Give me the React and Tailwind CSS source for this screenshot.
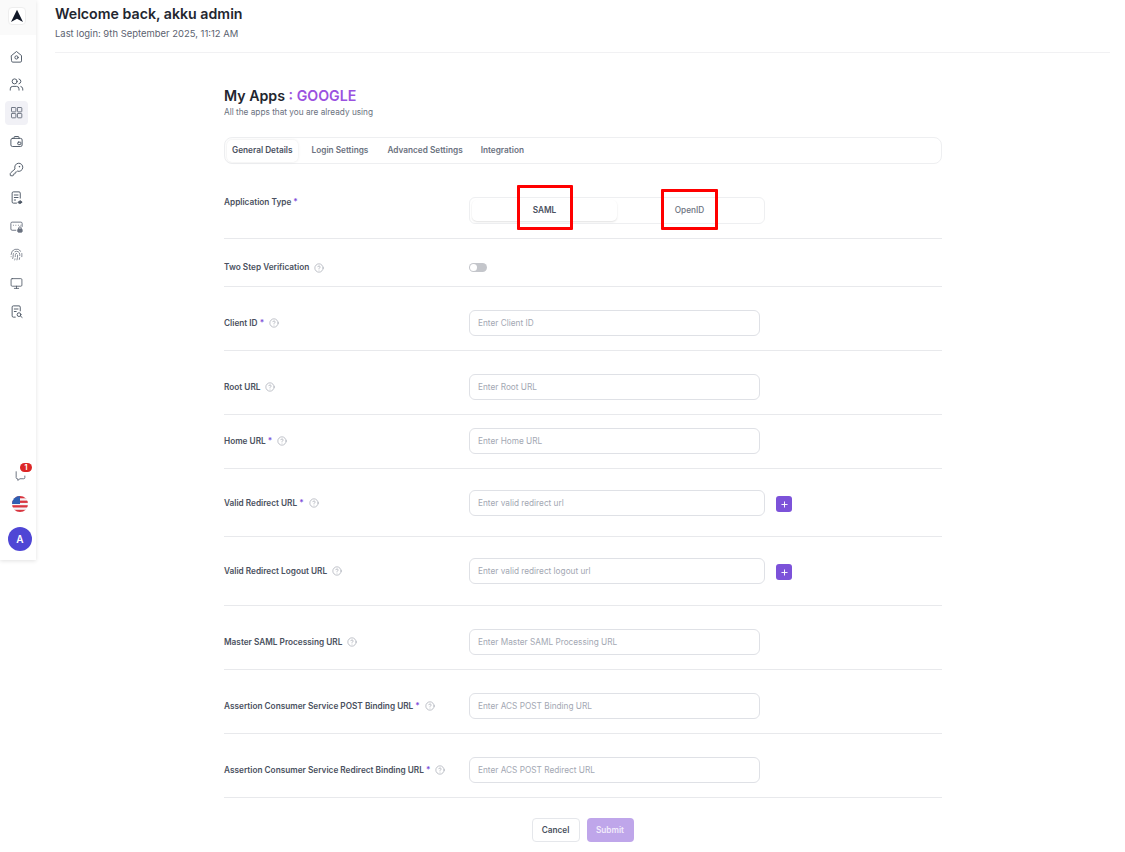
import React from "react";
import { Users, KeyRound, Monitor, Fingerprint, CircleHelp, Plus } from "lucide-react";

const S = { width: 15, height: 15, viewBox: "0 0 24 24", fill: "none", stroke: "currentColor", strokeWidth: 1.5, strokeLinecap: "round", strokeLinejoin: "round" };

const HomeI = () => (
  <svg {...S}><path d="M4 10.5 12 4l8 6.5V19a2 2 0 0 1-2 2H6a2 2 0 0 1-2-2z" /><circle cx="12" cy="13.5" r="2.6" /></svg>
);
const GridI = () => (
  <svg {...S}><rect x="4" y="4" width="7" height="7" rx="1" /><rect x="13.500" y="4" width="7" height="7" rx="1" /><rect x="4" y="13.500" width="7" height="7" rx="1" /><rect x="13.500" y="13.500" width="7" height="7" rx="1" /></svg>
);
const WalletI = () => (
  <svg {...S}><path d="M8 7V5.500A1.500 1.500 0 0 1 9.500 4h5A1.500 1.500 0 0 1 16 5.500V7" /><rect x="3" y="7" width="18" height="13" rx="2.500" /><rect x="14" y="13" width="5" height="4" rx="1" /></svg>
);
const DocCheck = () => (
  <svg {...S}><path d="M12 21H7a2 2 0 0 1-2-2V5a2 2 0 0 1 2-2h9a2 2 0 0 1 2 2v8" /><path d="M8.500 8h6M8.500 12h6M8.500 16h2" /><path d="M14.500 19.500 18 17l3 2.500-3 2z" fill="currentColor" /></svg>
);
const CardLock = () => (
  <svg {...S} stroke="#6b7280"><path d="M11 18H5a2 2 0 0 1-2-2V7a2 2 0 0 1 2-2h14a2 2 0 0 1 2 2v5" /><path d="M7 10h.01M11 10h.01M15 10h.01M19 10h.01" /><rect x="14" y="16" width="7" height="5" rx="1" fill="#6b7280" /><path d="M15.500 16v-1.500a2 2 0 0 1 4 0V16" /></svg>
);
const DocSearch = () => (
  <svg {...S}><path d="M10 21H7a2 2 0 0 1-2-2V5a2 2 0 0 1 2-2h9a2 2 0 0 1 2 2v6" /><path d="M8.500 8h6M8.500 12h3" /><circle cx="16" cy="17" r="3" /><path d="m18.500 19.500 2.500 2" /></svg>
);
const BellI = () => (
  <svg width="13" height="13" viewBox="0 0 24 24" fill="none" stroke="currentColor" strokeWidth="1.800" strokeLinecap="round" strokeLinejoin="round"><path d="M4 5v11a2 2 0 0 0 2 2h1v3l4-3h7a2 2 0 0 0 2-2v-3" /></svg>
);
const Flag = () => (
  <svg width="16" height="16" viewBox="0 0 16 16" className="rounded-full">
    <rect width="16" height="16" fill="#f4f4f6" />
    <rect y="0" width="16" height="2.300" fill="#d9353f" />
    <rect y="4.600" width="16" height="2.300" fill="#d9353f" />
    <rect y="9.200" width="16" height="2.300" fill="#d9353f" />
    <rect y="13.800" width="16" height="2.200" fill="#d9353f" />
    <rect width="8" height="8" fill="#2f5fb3" />
  </svg>
);

const Item = ({ children, active }) => (
  <div className={active ? "w-[23px] h-[24px] rounded-[4px] bg-[#f1f1f6] flex items-center justify-center text-[#6b7280]" : "w-[23px] h-[24px] flex items-center justify-center text-[#4b5563]"}>
    {children}
  </div>
);

const Sidebar = () => (
  <aside className="w-[36px] h-[560px] shrink-0 bg-white flex flex-col items-center shadow-[0_1px_4px_rgba(0,0,0,0.12)]">
    <div className="w-full h-[35px] bg-[#fafafa] flex items-center justify-center">
      <div className="w-[18px] h-[18px] mt-[-3px] mr-[2px] rounded-[4px] bg-white border border-[#eeeeee] flex items-center justify-center">
        <svg width="14" height="14" viewBox="0 0 14 14"><path d="M7 .8 13 13 7 9.800 1 13z" fill="#111827" /></svg>
      </div>
    </div>
    <div className="mt-[9px] mr-[3px] flex flex-col gap-[4.400px]">
      <Item><HomeI /></Item>
      <Item><Users size={15} strokeWidth={1.500} /></Item>
      <Item active><GridI /></Item>
      <Item><WalletI /></Item>
      <Item><KeyRound size={15} strokeWidth={1.500} /></Item>
      <Item><DocCheck /></Item>
      <Item><CardLock /></Item>
      <Item><span className="text-[#6b7280]"><Fingerprint size={13} strokeWidth={1.500} /></span></Item>
      <Item><Monitor size={13} strokeWidth={1.500} /></Item>
      <Item><DocSearch /></Item>
    </div>
    <div className="mt-auto ml-[4px] flex flex-col items-center mb-[9px]">
      <div className="relative h-[16px] w-[16px] flex items-center justify-center text-[#6b7280] mb-[13px]">
        <BellI />
        <span className="absolute top-[-4px] right-[-4px] w-[12px] h-[9px] rounded-full bg-[#dc2626] text-white text-[7px] leading-[9px] font-bold text-center">1</span>
      </div>
      <div className="mb-[15px] h-[16px]"><Flag /></div>
      <div className="w-[24px] h-[24px] rounded-full bg-[#4f46d5] text-white text-[10px] font-semibold flex items-center justify-center">A</div>
    </div>
  </aside>
);

const Help = () => <CircleHelp size={10} strokeWidth={1.300} className="text-[#8a909c]" />;

const Label = ({ text, req, help }) => (
  <div className="w-[245px] shrink-0 flex items-center gap-[5px] text-[8.250px] font-semibold text-[#4a5160]">
    <span>{text}{req && <span className="text-[#7c4dd8]"> *</span>}</span>
    {help && <Help />}
  </div>
);

const Field = ({ ph, wide }) => (
  <div className={(wide ? "w-[296px]" : "w-[291px]") + " h-[26px] rounded-[6px] border border-[#dfe1e6] bg-white px-[8px] flex items-center text-[8.250px] text-[#a3a8b3]"}>{ph}</div>
);

const Row = ({ h, label, req, help, ph, add }) => (
  <div className={"flex items-center border-b border-[#e8e9ec] " + h}>
    <Label text={label} req={req} help={help} />
    <Field ph={ph} wide={add} />
    {add && (
      <div className="ml-[11px] mt-[2px] w-[16px] h-[16px] rounded-[3px] bg-[#7c52d9] text-white flex items-center justify-center">
        <Plus size={9} strokeWidth={2.500} />
      </div>
    )}
  </div>
);

export default function App() {
  return (
    <div className="w-[1125px] h-[852px] overflow-hidden bg-white flex font-['Inter',sans-serif] relative">
      <Sidebar />
      <main className="flex-1 min-w-0">
        <header className="ml-[19px] mr-[15px] h-[53px] border-b border-[#f1f1f3]">
          <h1 className="pt-[5px] text-[14.200px] leading-[17px] font-semibold text-[#23262f]">Welcome back, akku admin</h1>
          <p className="mt-[6px] text-[9.450px] leading-[12px] text-[#5b6270]">Last login: 9th September 2025, 11:12 AM</p>
        </header>

        <section className="ml-[188px] w-[718px]">
          <h2 className="mt-[34px] text-[14.200px] leading-[17px] font-semibold text-[#23262f]">My Apps <span className="text-[#9a52e0]">: GOOGLE</span></h2>
          <p className="mt-[3px] text-[8.250px] leading-[11px] text-[#6b7280]">All the apps that you are already using</p>

          <div className="mt-[19px] h-[27px] rounded-[8px] border border-[#eeeff1] flex items-center px-[2px] gap-[2px] text-[8.250px] font-semibold text-[#6b7280]">
            <div className="h-[22px] px-[5px] rounded-[5px] bg-white shadow-[0_0_3px_rgba(0,0,0,0.10)] flex items-center text-[#4a5160]">General Details</div>
            <div className="h-[22px] px-[8px] ml-[4px] flex items-center">Login Settings</div>
            <div className="h-[22px] px-[8px] ml-[1px] flex items-center">Advanced Settings</div>
            <div className="h-[22px] px-[8px] flex items-center">Integration</div>
          </div>

          <div className="flex items-start h-[75px] border-b border-[#e8e9ec]">
            <div className="mt-[32px]"><Label text="Application Type" req /></div>
            <div className="mt-[33px] w-[296px] h-[27px] rounded-[6px] border border-[#eeeff1] p-[2px] flex text-[8.250px] font-medium">
              <div className="flex-1 rounded-[5px] bg-white shadow-[0_1px_2px_rgba(0,0,0,0.12)] flex items-center justify-center font-semibold text-[#4a5160]">SAML</div>
              <div className="flex-1 flex items-center justify-center text-[#6b7280]">OpenID</div>
            </div>
          </div>

          <div className="flex items-center h-[48px] pt-[10px] border-b border-[#e8e9ec]">
            <Label text="Two Step Verification" help />
            <div className="w-[18px] h-[9px] rounded-full bg-[#c4c6cb] p-[1px]"><div className="w-[7px] h-[7px] rounded-full bg-white" /></div>
          </div>

          <Row h="h-[64px] pt-[9px]" label="Client ID" req help ph="Enter Client ID" />
          <Row h="h-[64px] pt-[9px]" label="Root URL" help ph="Enter Root URL" />
          <Row h="h-[54px] pb-[1px]" label="Home URL" req help ph="Enter Home URL" />
          <Row h="h-[68px] pt-[1px]" label="Valid Redirect URL" req help ph="Enter valid redirect url" add />
          <Row h="h-[69px]" label="Valid Redirect Logout URL" help ph="Enter valid redirect logout url" add />
          <Row h="h-[64px] pt-[9px]" label="Master SAML Processing URL" help ph="Enter Master SAML Processing URL" />
          <Row h="h-[64px] pt-[9px]" label="Assertion Consumer Service POST Binding URL" req help ph="Enter ACS POST Binding URL" />
          <Row h="h-[64px] pt-[9px]" label="Assertion Consumer Service Redirect Binding URL" req help ph="Enter ACS POST Redirect URL" />

          <div className="mt-[20px] flex justify-center gap-[7px] text-[8.250px] font-semibold ml-[-1px]">
            <div className="w-[48px] h-[24px] rounded-[4px] border border-[#e5e7eb] bg-white text-[#4a5160] flex items-center justify-center">Cancel</div>
            <div className="w-[47px] h-[24px] rounded-[4px] bg-[#bfa6ea] text-[#f1ebfb] flex items-center justify-center">Submit</div>
          </div>
        </section>
      </main>

      <div className="absolute left-[517px] top-[185px] w-[56px] h-[45px] border-[3px] rounded-[1px] border-[#ff0000]" />
      <div className="absolute left-[661px] top-[189px] w-[57px] h-[41px] border-[3px] rounded-[1px] border-[#ff0000]" />
    </div>
  );
}
